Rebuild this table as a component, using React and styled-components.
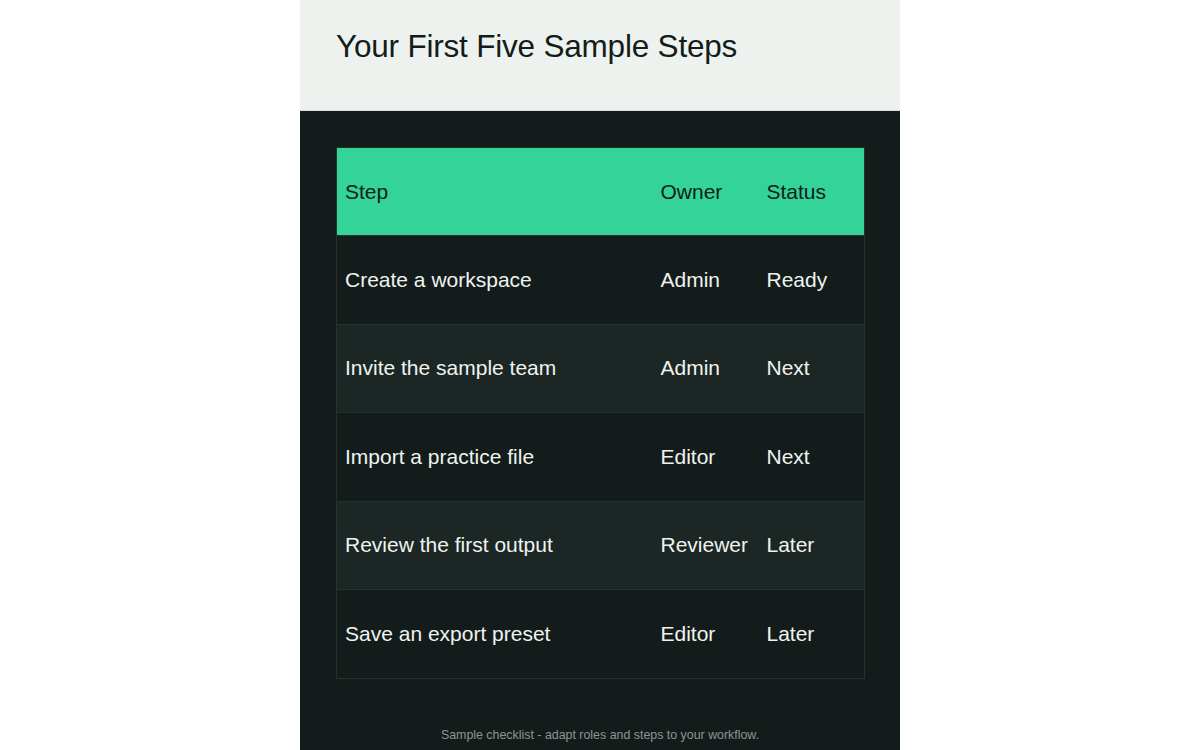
import React from "react";
import styled, { createGlobalStyle } from "styled-components";

const GlobalStyle = createGlobalStyle`
    html, body {
        margin: 0;
        padding: 0;
        background: #ffffff;
        font-family: "Liberation Sans", Arial, sans-serif;
    }
`;

const Page = styled.div`
    width: 600px;
    min-height: 750px;
    margin: 0 auto;
    display: flex;
    flex-direction: column;
    background-color: #131c1a;
`;

const Header = styled.header`
    background-color: #edf2ef;
    height: 111px;
    padding: 0 36px;
    box-sizing: border-box;
    border-bottom: 1px solid #d6dcd9;
`;

const Title = styled.h1`
    margin: 0;
    padding-top: 27px;
    font-size: 31.5px;
    font-weight: 400;
    line-height: 38px;
    color: #131c1a;
    letter-spacing: -0.2px;
`;

const Body = styled.main`
    padding: 36px 36px 0;
    display: flex;
    flex-direction: column;
`;

const Table = styled.table`
    width: 528px;
    border-collapse: collapse;
    table-layout: fixed;
    border: 1px solid #27312e;
`;

const HeadCell = styled.th`
    background-color: #34d399;
    color: #10201a;
    text-align: left;
    font-weight: 400;
    font-size: 21px;
    height: 88px;
    padding: 0 8px;
    box-sizing: border-box;
`;

const Row = styled.tr`
    background-color: ${(p) => (p.$alt ? "#1c2624" : "#131c1a")};
    border-top: 1px solid #27312e;
`;

const Cell = styled.td`
    color: #eef3f0;
    font-size: 21px;
    height: 88.5px;
    padding: 0 8px;
    box-sizing: border-box;
    white-space: nowrap;
`;

const Footer = styled.p`
    margin: 49px 0 0;
    text-align: center;
    font-size: 12.4px;
    color: #8b9692;
`;

const steps = [
    ["Create a workspace", "Admin", "Ready"],
    ["Invite the sample team", "Admin", "Next"],
    ["Import a practice file", "Editor", "Next"],
    ["Review the first output", "Reviewer", "Later"],
    ["Save an export preset", "Editor", "Later"],
];

export default function App() {
    return (
        <>
            <GlobalStyle />
            <Page>
                <Header>
                    <Title>Your First Five Sample Steps</Title>
                </Header>
                <Body>
                    <Table>
                        <colgroup>
                            <col style={{ width: 316 }} />
                            <col style={{ width: 106 }} />
                            <col style={{ width: 106 }} />
                        </colgroup>
                        <thead>
                            <tr>
                                <HeadCell>Step</HeadCell>
                                <HeadCell>Owner</HeadCell>
                                <HeadCell>Status</HeadCell>
                            </tr>
                        </thead>
                        <tbody>
                            {steps.map((s, i) => (
                                <Row key={s[0]} $alt={i % 2 === 1}>
                                    <Cell>{s[0]}</Cell>
                                    <Cell>{s[1]}</Cell>
                                    <Cell>{s[2]}</Cell>
                                </Row>
                            ))}
                        </tbody>
                    </Table>
                    <Footer>Sample checklist - adapt roles and steps to your workflow.</Footer>
                </Body>
            </Page>
        </>
    );
}
